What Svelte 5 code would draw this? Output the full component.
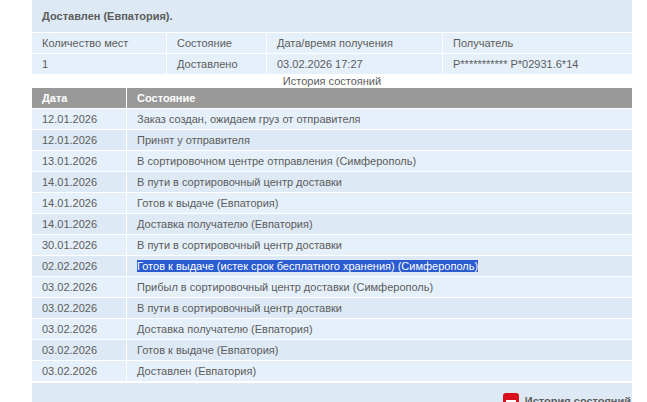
<script lang="ts">
	const history = [
		['12.01.2026', 'Заказ создан, ожидаем груз от отправителя'],
		['12.01.2026', 'Принят у отправителя'],
		['13.01.2026', 'В сортировочном центре отправления (Симферополь)'],
		['14.01.2026', 'В пути в сортировочный центр доставки'],
		['14.01.2026', 'Готов к выдаче (Евпатория)'],
		['14.01.2026', 'Доставка получателю (Евпатория)'],
		['30.01.2026', 'В пути в сортировочный центр доставки'],
		['02.02.2026', 'Готов к выдаче (истек срок бесплатного хранения) (Симферополь)'],
		['03.02.2026', 'Прибыл в сортировочный центр доставки (Симферополь)'],
		['03.02.2026', 'В пути в сортировочный центр доставки'],
		['03.02.2026', 'Доставка получателю (Евпатория)'],
		['03.02.2026', 'Готов к выдаче (Евпатория)'],
		['03.02.2026', 'Доставлен (Евпатория)']
	];
	const selectedRow = 7;
</script>

<div class="page">
	<div class="panel">
		<div class="title">Доставлен (Евпатория).</div>

		<table class="info">
			<colgroup>
				<col class="c-count" />
				<col class="c-state" />
				<col class="c-date" />
				<col />
			</colgroup>
			<tbody>
				<tr>
					<td>Количество мест</td>
					<td>Состояние</td>
					<td>Дата/время получения</td>
					<td>Получатель</td>
				</tr>
				<tr>
					<td>1</td>
					<td>Доставлено</td>
					<td>03.02.2026 17:27</td>
					<td>Р*********** Р*02931.6*14</td>
				</tr>
			</tbody>
		</table>

		<div class="caption">История состояний</div>

		<table class="history">
			<colgroup>
				<col class="c-day" />
				<col />
			</colgroup>
			<thead>
				<tr>
					<th>Дата</th>
					<th>Состояние</th>
				</tr>
			</thead>
			<tbody>
				{#each history as row, i}
					<tr class:even={i % 2 === 1}>
						<td>{row[0]}</td>
						<td>
							{#if i === selectedRow}
								<span class="selected">{row[1]}</span>
							{:else}
								{row[1]}
							{/if}
						</td>
					</tr>
				{/each}
			</tbody>
		</table>

		<div class="footer">
			<a class="toggle" href="#history">
				<svg width="16" height="16" viewBox="0 0 16 16">
					<rect width="16" height="16" rx="3" fill="#d9101c" />
					<rect x="3" y="7" width="10" height="8" fill="#fff" />
				</svg>
				История состояний
			</a>
		</div>
	</div>
</div>

<style>
	:global(body) {
		margin: 0;
		background: #fff;
		overflow: hidden;
	}

	.page {
		height: 402px;
		overflow: hidden;
		padding-left: 32px;
		font-family: "Liberation Sans", Arial, sans-serif;
		font-size: 11px;
		color: #5c5c5c;
	}

	.panel {
		width: 600px;
	}

	.title {
		height: 32px;
		box-sizing: border-box;
		padding: 10px 10px 0;
		line-height: 13px;
		font-weight: bold;
		background: #dde9f4;
	}

	table {
		width: 600px;
		border-collapse: collapse;
		table-layout: fixed;
	}

	.c-count {
		width: 134px;
	}

	.c-state {
		width: 100px;
	}

	.c-date {
		width: 176px;
	}

	.c-day {
		width: 94px;
	}

	td,
	th {
		padding: 0 10px;
		line-height: 13px;
		text-align: left;
		border-top: 1px solid #fff;
		border-left: 1px solid #fff;
	}

	td:first-child,
	th:first-child {
		border-left: 0;
	}

	td + td,
	th + th {
		padding-left: 10.5px;
	}

	.info td {
		height: 20px;
		background: #e5f0fa;
	}

	.caption {
		height: 14px;
		line-height: 14px;
		text-align: center;
	}

	.history th {
		height: 20px;
		border-top: 0;
		background: #999;
		color: #fff;
		font-weight: bold;
	}

	.history td {
		height: 20px;
		background: #e5f0fa;
	}

	.history .even td {
		background: #dde9f4;
	}

	.selected {
		background: #2a5bd0;
		color: #fff;
	}

	.footer {
		height: 40px;
		margin-top: 1px;
		border-top: 1px solid #fff;
		box-sizing: border-box;
		padding: 10px 1px 0 0;
		background: #dde9f4;
		text-align: right;
	}

	.toggle {
		display: inline-flex;
		align-items: center;
		gap: 6px;
		font-weight: bold;
		color: #5c5c5c;
		text-decoration: none;
	}
</style>
